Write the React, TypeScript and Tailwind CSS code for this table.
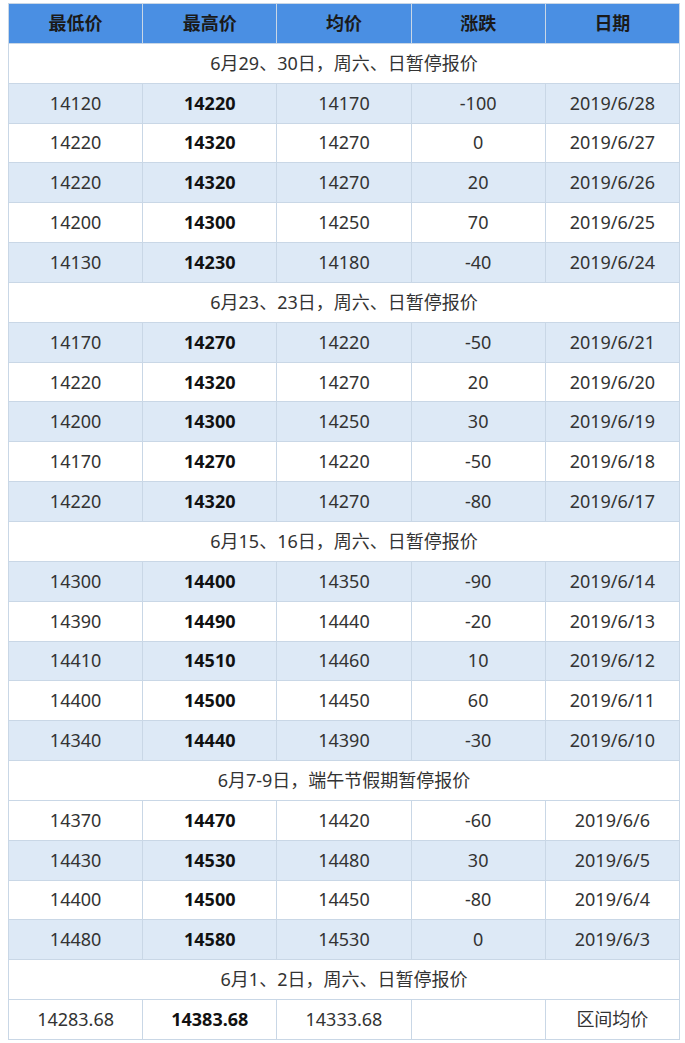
import React from "react";

type Row = { low: string; high: string; avg: string; chg: string; date: string; blue: boolean };
type Item = { note: string } | Row;

const mk = (low: string, high: string, avg: string, chg: string, date: string, blue: boolean): Row => ({
  low,
  high,
  avg,
  chg,
  date,
  blue,
});

const rows: Item[] = [
  { note: "6月29、30日，周六、日暂停报价" },
  mk("14120", "14220", "14170", "-100", "2019/6/28", true),
  mk("14220", "14320", "14270", "0", "2019/6/27", false),
  mk("14220", "14320", "14270", "20", "2019/6/26", true),
  mk("14200", "14300", "14250", "70", "2019/6/25", false),
  mk("14130", "14230", "14180", "-40", "2019/6/24", true),
  { note: "6月23、23日，周六、日暂停报价" },
  mk("14170", "14270", "14220", "-50", "2019/6/21", true),
  mk("14220", "14320", "14270", "20", "2019/6/20", false),
  mk("14200", "14300", "14250", "30", "2019/6/19", true),
  mk("14170", "14270", "14220", "-50", "2019/6/18", false),
  mk("14220", "14320", "14270", "-80", "2019/6/17", true),
  { note: "6月15、16日，周六、日暂停报价" },
  mk("14300", "14400", "14350", "-90", "2019/6/14", true),
  mk("14390", "14490", "14440", "-20", "2019/6/13", false),
  mk("14410", "14510", "14460", "10", "2019/6/12", true),
  mk("14400", "14500", "14450", "60", "2019/6/11", false),
  mk("14340", "14440", "14390", "-30", "2019/6/10", true),
  { note: "6月7-9日，端午节假期暂停报价" },
  mk("14370", "14470", "14420", "-60", "2019/6/6", false),
  mk("14430", "14530", "14480", "30", "2019/6/5", true),
  mk("14400", "14500", "14450", "-80", "2019/6/4", false),
  mk("14480", "14580", "14530", "0", "2019/6/3", true),
  { note: "6月1、2日，周六、日暂停报价" },
  mk("14283.68", "14383.68", "14333.68", "", "区间均价", false),
];

const heads = ["最低价", "最高价", "均价", "涨跌", "日期"];
const cell = "h-[39.85px] border border-[#c9d7e6] p-0 text-center align-middle";

export default function App() {
  return (
    <div
      className="bg-white pl-[8px] pt-[3px] text-[18px] text-[#333]"
      style={{ fontFamily: '"Noto Sans", "Noto Sans CJK SC", sans-serif' }}
    >
      <table className="w-[672px] table-fixed border-collapse">
        <thead>
          <tr className="bg-[#4a8fe3]">
            {heads.map((h) => (
              <th key={h} className={`${cell} border-[#6fa6ea] font-bold text-[#1a1a1a]`}>
                {h}
              </th>
            ))}
          </tr>
        </thead>
        <tbody>
          {rows.map((r, i) =>
            "note" in r ? (
              <tr key={i} className="bg-white">
                <td colSpan={5} className={cell}>
                  {r.note}
                </td>
              </tr>
            ) : (
              <tr key={i} className={r.blue ? "bg-[#dde9f6]" : "bg-white"}>
                <td className={cell}>{r.low}</td>
                <td className={`${cell} font-bold text-[#111]`}>{r.high}</td>
                <td className={cell}>{r.avg}</td>
                <td className={cell}>{r.chg}</td>
                <td className={cell}>{r.date}</td>
              </tr>
            )
          )}
        </tbody>
      </table>
    </div>
  );
}
